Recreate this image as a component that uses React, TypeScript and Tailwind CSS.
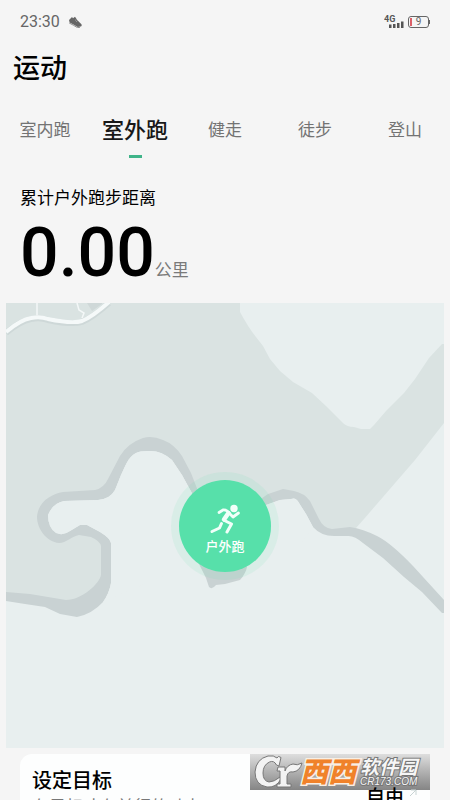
const tabs = ["室内跑", "室外跑", "健走", "徒步", "登山"];

const StatusBar = () => {
  return (
    <div className="flex h-10 items-center justify-between pl-5 pr-5 pt-1 text-[#666]">
      <div className="flex items-center gap-2">
        <span className="font-['Roboto',sans-serif] text-base">23:30</span>
        <svg viewBox="0 0 14 12" className="h-3 w-3.5" fill="#666">
          <path d="M1 4 4 1l1 1.2L7 .8l2.4 3.4 3.8 3.8c.9 1 .5 2.3-.6 2.6L9.700 11 5.500 8.400 1.600 6.400Z" />
          <path d="m1.200 7 4 2.100 4.200 2.500 2.600-.2" fill="none" stroke="#777" strokeWidth=".8" />
          <path d="m7 4.500 1.400-1M8 5.800l1.400-1" stroke="#bbb" strokeWidth=".6" />
        </svg>
      </div>
      <div className="flex items-center gap-1">
        <svg viewBox="0 0 20 14" className="h-3.5 w-5" role="img" aria-label="4G">
          <text x="0" y="7" fontSize="9" fontWeight="700" fontFamily="Roboto, sans-serif" fill="#555">4G</text>
          <path d="M5 9.500h2.500V13H5zM9 9h2.500v4H9zM13 8h2.500v5H13zM17 6.500h2.500V13H17z" fill="#555" />
        </svg>
        <div className="flex items-center">
          <div className="relative flex h-3 w-[21px] items-center justify-center rounded-[3px] border border-[#666] font-['Roboto',sans-serif] text-[10px] leading-none">
            <span className="absolute inset-y-px left-px w-0.5 bg-[#dc6068]" />
            9
          </div>
          <span className="h-1 w-px bg-[#666]" />
        </div>
      </div>
    </div>
  );
};

const MapView = () => {
  return (
    <svg viewBox="6 303 438 445" className="block w-full" aria-hidden="true">
      <path fill="#e8efef" d="M6 303h438v445H6z" />
      {/* land */}
      <path
        fill="#dae3e2"
        d="M6 303H240V312Q248 327 256 337L263 346 270 359 280 371 293 382 312 393 326 406 343 423Q347 427 354 427L361 429H370L374 425 386 411 404 393 415 379 429 358 442 344H444V423L415 460 364 519 356 528 332 532 315 522 303 499 284 495 265 500 225 520 195 492 180 456 150 441 126 455 110 490 64 497 43 515 62 538 84 529 104 545V580L85 603 6 596Z"
      />
      {/* river */}
      <path
        fill="#c9d2d3"
        d="M6 592 30 594 66 600C82 600 100 583 101 575V546Q100 541 91 537L79 535C72 536 66 543 59 543C47 542 37 529 37 517C38 502 51 494 63 492L95 490Q104 488 108 479L120 456Q128 443 143 438Q152 435 163 440Q174 444 182 456L191 473 198 491 193 495 182 475 172 460Q161 450 148 451Q139 451 136 453C128 457 125 467 121 475L115 490Q110 499 98 500L64 501Q53 503 48 515Q48 528 56 533Q63 536 70 531L80 525H87L100 532Q110 538 111 543V583Q109 594 103 602Q92 614 77 617L60 614 45 607 25 604 6 601Z"
      />
      {/* the two banks inside the left bends */}
      <path
        fill="#e8efef"
        d="M148 451Q139 451 136 453C128 457 125 467 121 475L115 490Q110 499 98 500L64 501Q53 503 48 515Q48 528 56 533Q63 536 70 531L80 525H87L100 532Q110 538 111 543V583Q109 594 103 602L200 560 225 520 193 495 182 475 172 460Q161 450 148 451Z"
      />
      <path
        fill="#c9d2d3"
        d="M255 503 268 494 277 491 283 489 294 491Q304 493 310 501L319 519Q323 528 332 529L350 527Q363 529 377 536Q391 543 413 566L444 600V613H442L422 592 404 577 383 558 363 543Q354 535 347 536H334Q321 536 313 527L306 514 299 503Q296 497 291 499L280 500 266 505Z"
      />
      <path fill="#e8efef" d="M266 505 280 500 291 499Q296 497 299 503L306 514 313 527 300 545 250 550 240 520Z" />
      <path fill="#c9d2d3" d="M198 562 206 578 209 587Q212 590 216 585L225 584 240 580Q246 573 247 567L240 555Z" />
      {/* roads and the small block near them */}
      <path fill="#cfd8d8" d="m87 303 5 8 10-7v-1z" />
      <path d="M37 303V318M77 303 79 310 84 313 82 318" fill="none" stroke="#f4f8f8" strokeWidth="1.500" />
      <path d="M6 333Q20 321 31 319Q40 317 48 320Q72 325 82 322Q92 318 109 303" fill="none" stroke="#ced8d8" strokeWidth="6" />
      <path d="M6 332Q20 320 31 318Q40 316 48 319Q72 324 82 321Q92 317 109 302" fill="none" stroke="#f5f9f9" strokeWidth="4" />
    </svg>
  );
};

const StartButton = () => {
  return (
    <button
      type="button"
      className="absolute left-1/2 top-1/2 flex size-[92px] -translate-x-1/2 -translate-y-1/2 flex-col items-center rounded-full bg-[#57e0aa] pt-6 text-white ring-8 ring-[#57e0aa]/10"
    >
      <svg viewBox="0 0 32 30" className="h-[30px] w-8" fill="none" stroke="#f1fff9" strokeLinecap="round" strokeLinejoin="round">
        <circle cx="25" cy="4.500" r="3.700" fill="#f1fff9" stroke="none" />
        <path d="M10 8.500 14 6Q17 5.500 20 8.500" strokeWidth="2.800" />
        <path d="M20 9 24 13 29.500 9" strokeWidth="2.800" />
        <path d="M19.500 9 15 15.500" strokeWidth="4.500" />
        <path d="M15.500 16.500 22.500 20 18 28" strokeWidth="3" />
        <path d="M12.500 19.500 10.500 24 3 27.500" strokeWidth="3" />
      </svg>
      <span className="mt-1 text-[13px] leading-4 font-medium">户外跑</span>
    </button>
  );
};

const Watermark = () => {
  return (
    <div className="absolute right-0 top-0 flex h-9 w-[180px] items-center bg-linear-to-b from-[#dedede] to-[#858585] pl-1">
      <svg viewBox="0 0 50 36" className="h-9 w-[50px] shrink-0" fill="none">
        <path
          d="M27 3.500 25 12 22.500 11Q20 6 15.500 8Q9 11 9 19Q9 27 15 28Q20 28 26 23L27 25Q22 34 13 33Q1 31 1 18Q2 5 14 2Q20 1 23 4Q24 1 27 3.500Z"
          fill="#f3f3f3"
          stroke="#777"
        />
        <path
          d="M24 13H31V17Q33 11 39 10Q43 12 48 9Q46 17 39 18Q34 17 33 22V30H37V33H23V30H26V17H23Z"
          fill="#f3f3f3"
          stroke="#777"
        />
      </svg>
      <span className="-ml-1 pb-1 text-[28px] leading-8 font-black whitespace-nowrap italic text-[#f0822a] [-webkit-text-stroke:3px_#f8efe4] [paint-order:stroke]">
        西西
      </span>
      <div className="ml-1 flex flex-col items-center italic text-[#f6f6f6] [-webkit-text-stroke:2px_#777] [paint-order:stroke]">
        <span className="text-[19px] leading-5 font-bold whitespace-nowrap">软件园</span>
        <span className="font-['Liberation_Sans',sans-serif] text-[10px] leading-3">CR173.COM</span>
      </div>
    </div>
  );
};

export default function App() {
  return (
    <div className="h-screen overflow-hidden bg-[#f5f5f5] font-['Noto_Sans_CJK_SC',sans-serif] text-black">
      <StatusBar />

      <h1 className="mt-[7px] px-[13px] text-[27px] leading-10 font-medium">运动</h1>

      <nav className="mt-5 grid grid-cols-5">
        {tabs.map((tab, i) => (
          <a key={tab} href="#" className="flex h-[54px] flex-col items-center text-[#737373]">
            {i === 1 ? (
              <>
                <span className="text-[22px] leading-[42px] font-medium text-[#181818]">{tab}</span>
                <span className="mt-1.5 h-[3px] w-[13px] shrink-0 bg-[#3fb489]" />
              </>
            ) : (
              <span className="text-[17px] leading-[44px]">{tab}</span>
            )}
          </a>
        ))}
      </nav>

      <section className="mt-6 px-5">
        <h2 className="text-[17px] leading-6">累计户外跑步距离</h2>
        <p className="flex items-baseline">
          <span className="font-['Roboto',sans-serif] text-[68px] leading-[88px] font-medium">0.00</span>
          <span className="text-[17px] text-[#7a7a7a]">公里</span>
        </p>
      </section>

      <div className="relative mx-1.5 mt-1.5">
        <MapView />
        <StartButton />
      </div>

      <section className="relative mx-5 mt-1.5 rounded-t-xl bg-[#fdfefe] px-3 pt-3">
        <Watermark />
        <div className="relative flex justify-between">
          <div>
            <h2 className="text-xl leading-7 font-medium">设定目标</h2>
            <p className="text-[17px] leading-6 text-[#777]">有目标才有前行的动力</p>
          </div>
          <a href="#" className="flex items-center gap-1 self-end text-[19px] leading-[44px] font-medium">
            自由
            <svg viewBox="0 0 10 16" className="h-4 w-2.5" fill="none" stroke="#c8d4d4">
              <path d="M3 2h5v5M8 2 2 8" />
            </svg>
          </a>
        </div>
      </section>
    </div>
  );
}
